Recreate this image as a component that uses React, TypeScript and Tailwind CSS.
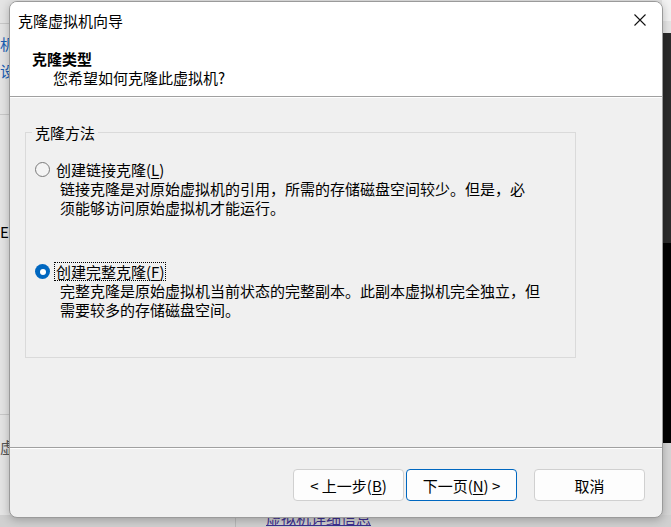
import React from "react";

const font = "font-['Noto_Sans_CJK_SC',_'Noto_Sans',_sans-serif]";

// Windows-style radio button
function Radio({checked}: {checked?: boolean}) {
  if (checked) {
    return (
      <span className="flex h-[15px] w-[15px] shrink-0 items-center justify-center rounded-full bg-[#0067c0]">
        <span className="h-[6px] w-[6px] rounded-full bg-white" />
      </span>
    );
  }
  return <span className="h-[15px] w-[15px] shrink-0 rounded-full border border-[#7a7a7a] bg-[#f4f4f4]" />;
}

function Mnemonic({k}: {k: string}) {
  return (
    <>
      (<span className="underline underline-offset-2">{k}</span>)
    </>
  );
}

const options = [
  {
    label: "创建链接克隆",
    key: "L",
    lines: ["链接克隆是对原始虚拟机的引用，所需的存储磁盘空间较少。但是，必", "须能够访问原始虚拟机才能运行。"],
    checked: false,
  },
  {
    label: "创建完整克隆",
    key: "F",
    lines: ["完整克隆是原始虚拟机当前状态的完整副本。此副本虚拟机完全独立，但", "需要较多的存储磁盘空间。"],
    checked: true,
  },
];

export default function App() {
  return (
    <div className={`relative h-[527px] w-[671px] overflow-hidden bg-[#e4e4e4] text-black ${font}`}>
      {/* desktop behind the dialog */}
      <div className="absolute left-0 top-[23px] h-px w-[9px] bg-[#c8c8c8]" />
      <div className="absolute left-0 top-[34px] whitespace-nowrap text-[15px] leading-[19px] text-[#1a5fb4]">机器</div>
      <div className="absolute left-0 top-[61px] whitespace-nowrap text-[15px] leading-[19px] text-[#1a5fb4]">设置</div>
      <div className="absolute left-0 top-[114px] h-px w-[9px] bg-[#c8c8c8]" />
      <div className="absolute left-0 top-[222px] whitespace-nowrap text-[15px] leading-[19px]">E)</div>
      <div className="absolute left-0 top-[414px] h-px w-[9px] bg-[#c8c8c8]" />
      <div className="absolute left-0 top-[437px] whitespace-nowrap text-[15px] leading-[19px] text-[#555]">虚拟</div>

      <div className="absolute right-0 top-0 flex h-full w-[9px] flex-col">
        <div className="h-[21px] bg-[#f3f3f3]" />
        <div className="h-[12px] bg-[#e6e6e6]" />
        <div className="h-[210px] bg-[#2b2b2b]" />
        <div className="h-[200px] bg-black" />
        <div className="flex-1 bg-[#d6d6d6]" />
      </div>

      <div className="absolute bottom-0 left-0 h-[12px] w-full bg-[#d0d0d0]" />
      <div className="absolute bottom-0 left-[235px] h-[12px] w-px bg-[#b8b8b8]" />
      <div className="absolute left-[266px] top-[508px] text-[15px] leading-[19px] text-[#3d2f8f] underline">
        虚拟机详细信息
      </div>

      {/* dialog */}
      <div className="absolute left-[9px] top-[1px] flex h-[517px] w-[654px] flex-col overflow-hidden rounded-[8px] border border-[#9a9a9a] bg-[#f0f0f0] shadow-[0_2px_10px_rgba(0,0,0,0.25)]">
        <div className="flex h-[94px] flex-col bg-white">
          <div className="flex h-[37px] items-center justify-between pl-[8px] pr-[16px]">
            <span className="text-[15px] leading-[19px]">克隆虚拟机向导</span>
            <svg width="12" height="12" viewBox="0 0 12 12" className="mt-[-2px]">
              <path d="M0.5 0.5 L11.5 11.5 M11.5 0.5 L0.5 11.5" stroke="#111" strokeWidth="1.1" fill="none" />
            </svg>
          </div>
          <div className="mt-[10px] pl-[22px] text-[15px] font-bold leading-[19px]">克隆类型</div>
          <div className="pl-[43px] text-[15px] leading-[19px]">您希望如何克隆此虚拟机?</div>
        </div>
        <div className="h-px bg-[#a0a0a0]" />
        <div className="h-px bg-white" />

        <div className="h-[349px] pl-[15px] pt-[34px]">
          <div className="relative h-[226px] w-[551px] border border-[#dadada] pl-[9px] pt-[27px] text-[15px]">
            <span className="absolute left-[6px] top-[-10px] bg-[#f0f0f0] px-[3px] leading-[19px]">克隆方法</span>
            {options.map((o, i) => (
              <div key={o.key} className={i > 0 ? "mt-[45px]" : ""}>
                <div className="flex h-[19px] items-center gap-[4px]">
                  <Radio checked={o.checked} />
                  <span
                    className={`border px-px leading-[17px] ${
                      o.checked ? "border-dotted border-black" : "border-transparent"
                    }`}
                  >
                    {o.label}
                    <Mnemonic k={o.key} />
                  </span>
                </div>
                <div className="ml-[25px] leading-[19px]">
                  {o.lines.map((l) => (
                    <div key={l}>{l}</div>
                  ))}
                </div>
              </div>
            ))}
          </div>
        </div>

        <div className="h-px bg-[#a0a0a0]" />
        <div className="h-px bg-white" />

        <div className="flex flex-1 items-start justify-end pr-[17px] pt-[20px] text-[15px]">
          <button className="h-[32px] w-[111px] rounded-[4px] border border-[#d0d0d0] bg-[#fdfdfd] leading-[19px]">
            &lt; 上一步<Mnemonic k="B" />
          </button>
          <button className="ml-[2px] h-[32px] w-[111px] rounded-[4px] border border-[#0067c0] bg-[#fdfdfd] leading-[19px]">
            下一页<Mnemonic k="N" /> &gt;
          </button>
          <button className="ml-[17px] h-[32px] w-[111px] rounded-[4px] border border-[#d0d0d0] bg-[#fdfdfd] leading-[19px]">
            取消
          </button>
        </div>
      </div>
    </div>
  );
}
